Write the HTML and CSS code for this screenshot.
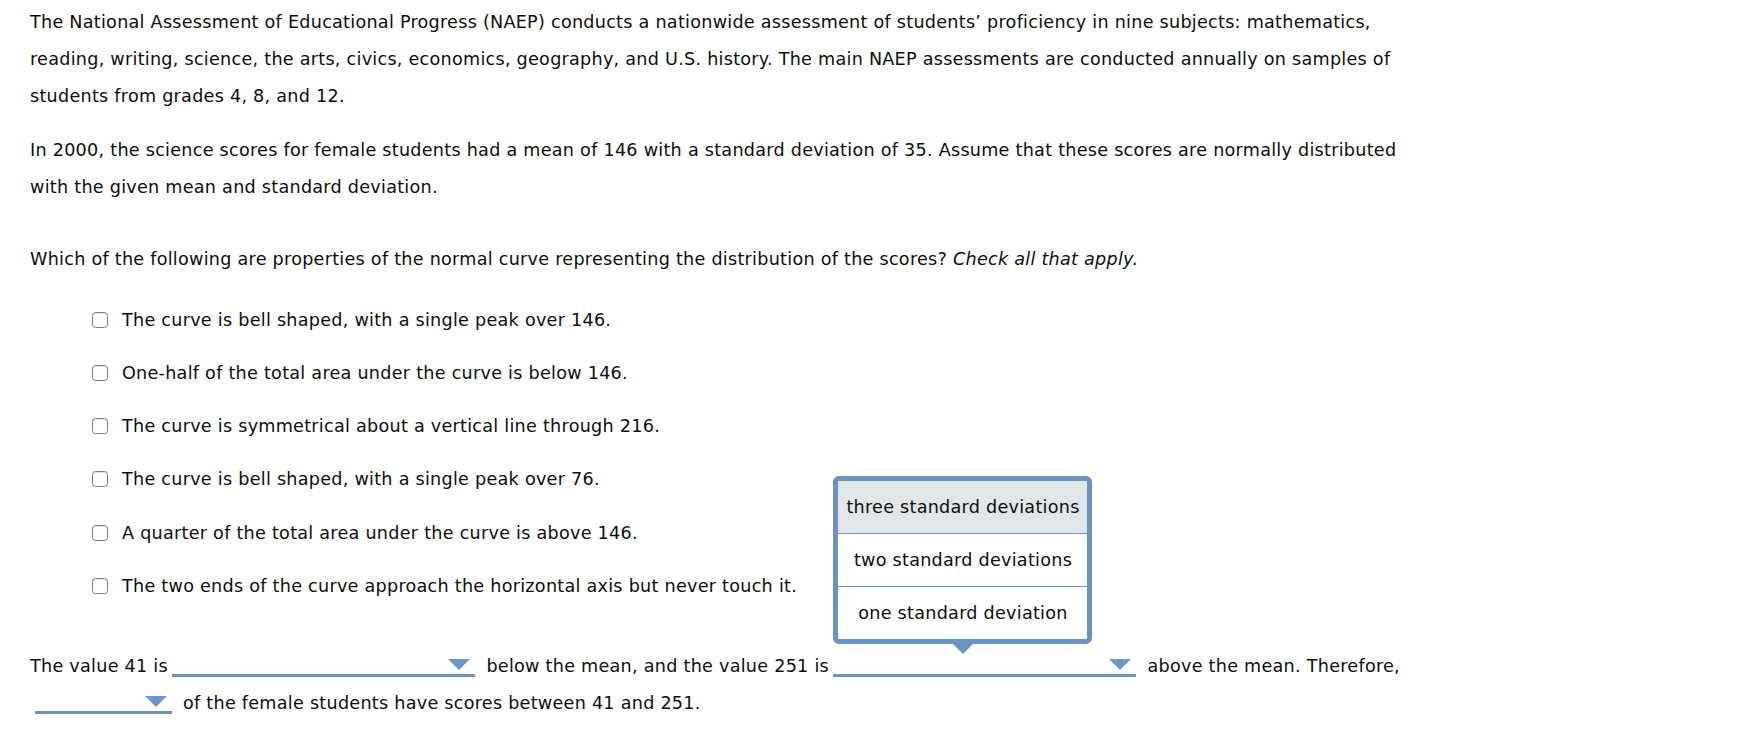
FILE: index.html
```html
<!DOCTYPE html>
<html lang="en">
<head>
<meta charset="utf-8">
<title>NAEP Normal Curve Question</title>
<link rel="stylesheet" href="styles.css">
</head>
<body>
<main class="page">
  <p class="para">The National Assessment of Educational Progress (NAEP) conducts a nationwide assessment of students’ proficiency in nine subjects: mathematics,<br>reading, writing, science, the arts, civics, economics, geography, and U.S. history. The main NAEP assessments are conducted annually on samples of<br>students from grades 4, 8, and 12.</p>
  <p class="para">In 2000, the science scores for female students had a mean of 146 with a standard deviation of 35. Assume that these scores are normally distributed<br>with the given mean and standard deviation.</p>
  <p class="question">Which of the following are properties of the normal curve representing the distribution of the scores? <em>Check all that apply.</em></p>
  <ul class="choices">
    <li class="choice"><span class="box"></span><span>The curve is bell shaped, with a single peak over 146.</span></li>
    <li class="choice"><span class="box"></span><span>One-half of the total area under the curve is below 146.</span></li>
    <li class="choice"><span class="box"></span><span>The curve is symmetrical about a vertical line through 216.</span></li>
    <li class="choice"><span class="box"></span><span>The curve is bell shaped, with a single peak over 76.</span></li>
    <li class="choice"><span class="box"></span><span>A quarter of the total area under the curve is above 146.</span></li>
    <li class="choice"><span class="box"></span><span>The two ends of the curve approach the horizontal axis but never touch it.</span></li>
  </ul>
  <div class="fill">
    <div class="fill-row">
      <span>The value 41 is</span>
      <span class="dd dd-wide"><svg class="caret" width="22" height="11" viewBox="0 0 22 11"><polygon points="0,0 22,0 11,11"/></svg></span>
      <span>below the mean, and the value 251 is</span>
      <span class="dd dd-wide dd-open">
        <span class="menu">
          <span class="opt opt-hi">three standard deviations</span>
          <span class="opt">two standard deviations</span>
          <span class="opt">one standard deviation</span>
          <span class="menu-tip"></span>
        </span>
        <svg class="caret" width="22" height="11" viewBox="0 0 22 11"><polygon points="0,0 22,0 11,11"/></svg>
      </span>
      <span>above the mean. Therefore,</span>
    </div>
    <div class="fill-row">
      <span class="dd dd-narrow dd-first"><svg class="caret" width="22" height="11" viewBox="0 0 22 11"><polygon points="0,0 22,0 11,11"/></svg></span>
      <span>of the female students have scores between 41 and 251.</span>
    </div>
  </div>
</main>
</body>
</html>
```

FILE: styles.css
```css
html, body {
  margin: 0;
  padding: 0;
  background: #ffffff;
}

body {
  font-family: "DejaVu Sans", Verdana, sans-serif;
  font-size: 17.6px;
  letter-spacing: 0.26px;
  color: #0d0d0d;
}

.page {
  padding: 4px 30px 0 30px;
}

.para {
  margin: 0 0 16.5px 0;
  line-height: 37px;
  white-space: nowrap;
}

.question {
  margin: 35px 0 0 0;
  line-height: 37px;
}

.question em {
  font-style: italic;
}

.choices {
  list-style: none;
  margin: 23.5px 0 0 0;
  padding: 0 0 0 62px;
  display: flex;
  flex-direction: column;
  gap: 16.3px;
}

.choice {
  display: flex;
  align-items: center;
  height: 37px;
}

.box {
  width: 14px;
  height: 14px;
  border: 1.5px solid #7d7d7d;
  border-radius: 3.5px;
  background: #ffffff;
  box-shadow: inset 0 1px 1px rgba(0,0,0,0.12);
  margin-right: 14px;
  flex: none;
}

.fill {
  margin-top: 43px;
}

.fill-row {
  display: flex;
  align-items: center;
  height: 37px;
  white-space: nowrap;
}

.dd {
  position: relative;
  display: flex;
  align-items: center;
  justify-content: flex-end;
  height: 19px;
  border-bottom: 3px solid #6b93c0;
  margin: 0 11px 0 4.5px;
  padding-right: 5px;
  flex: none;
}

.dd-wide {
  width: 298px;
}

.dd-narrow {
  width: 132px;
}

.dd-first {
  margin-left: 5px;
}

.caret {
  display: block;
  fill: #6b96c6;
}

.menu {
  position: absolute;
  left: 0;
  bottom: calc(100% + 11px);
  width: 249px;
  border: 5px solid #6b93c0;
  border-radius: 6px;
  background: #ffffff;
  display: flex;
  flex-direction: column;
}

.opt {
  height: 52px;
  display: flex;
  align-items: center;
  justify-content: center;
  color: #0d0d0d;
  border-top: 1px solid #6b93c0;
}

.opt:first-child {
  border-top: none;
}

.opt-hi {
  background: #e1e6e9;
}

.menu-tip {
  position: absolute;
  left: 50%;
  bottom: -15px;
  margin-left: -10px;
  width: 0;
  height: 0;
  border-left: 10px solid transparent;
  border-right: 10px solid transparent;
  border-top: 10px solid #6b93c0;
}
```
